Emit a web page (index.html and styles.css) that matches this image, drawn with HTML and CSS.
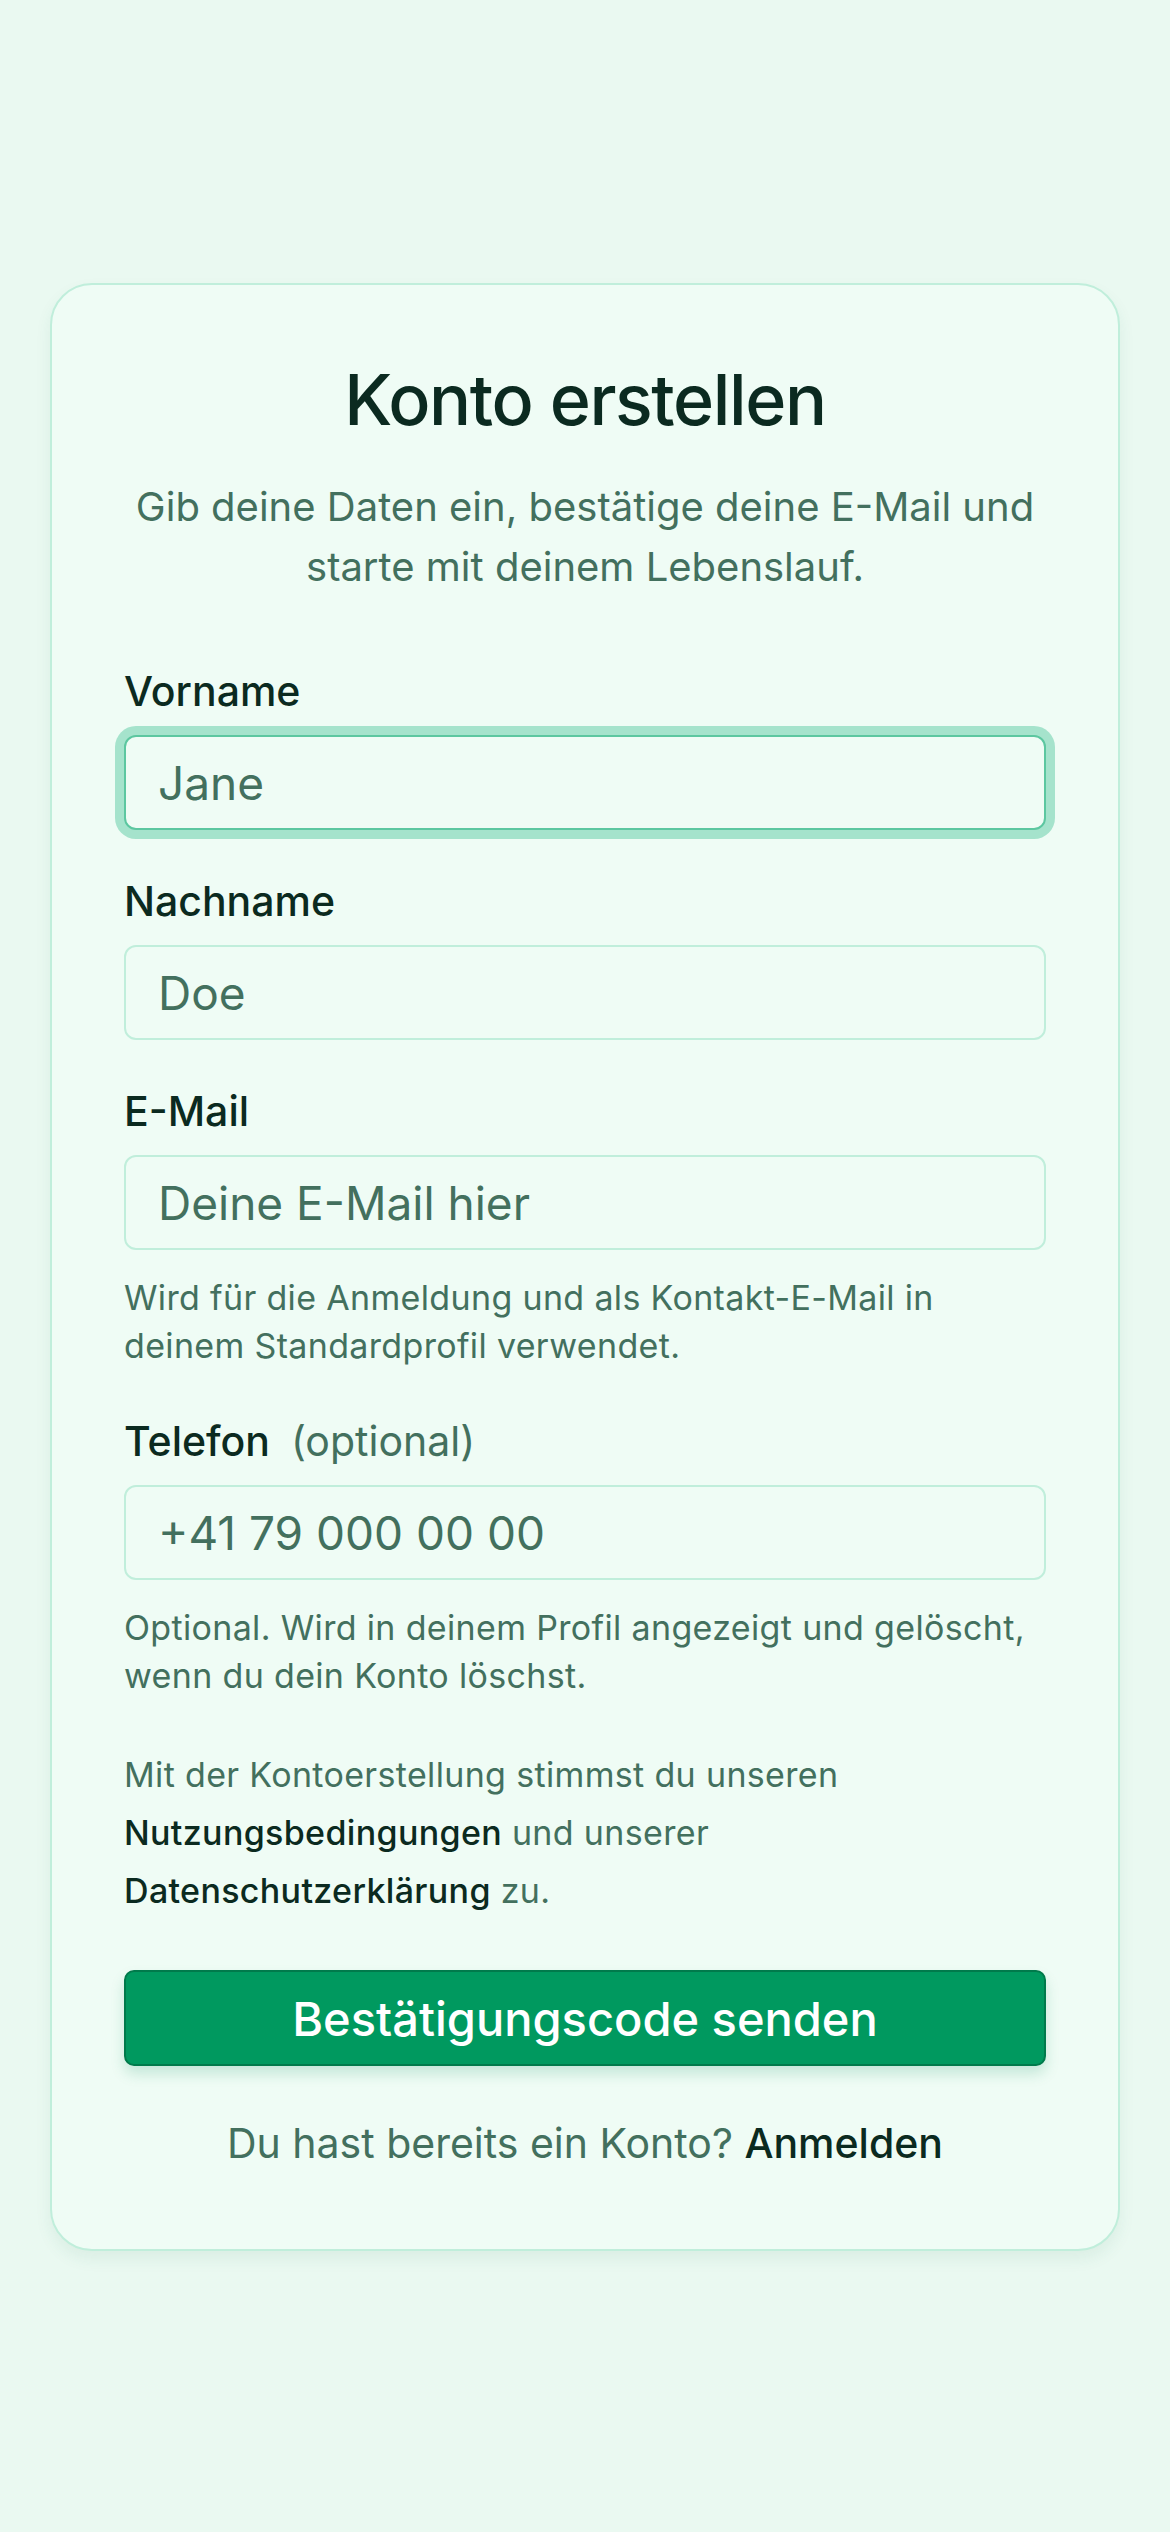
FILE: index.html
```html
<!DOCTYPE html>
<html lang="de">
<head>
    <meta charset="UTF-8">
    <meta name="viewport" content="width=device-width, initial-scale=1.0">
    <title>Konto erstellen</title>
    <link rel="stylesheet" href="styles.css">
</head>
<body>
    <main class="page">
        <!-- Registration card -->
        <section class="card">
            <h1>Konto erstellen</h1>
            <p class="intro">Gib deine Daten ein, bestätige deine E-Mail und starte mit deinem Lebenslauf.</p>

            <form class="signup-form" onsubmit="return false;">
                <div class="field">
                    <label for="firstName">Vorname</label>
                    <input type="text" id="firstName" class="is-focused" placeholder="Jane">
                </div>

                <div class="field">
                    <label for="lastName">Nachname</label>
                    <input type="text" id="lastName" placeholder="Doe">
                </div>

                <div class="field">
                    <label for="email">E-Mail</label>
                    <input type="email" id="email" placeholder="Deine E-Mail hier">
                    <p class="hint">Wird für die Anmeldung und als Kontakt-E-Mail in deinem Standardprofil verwendet.</p>
                </div>

                <div class="field">
                    <label for="phone">Telefon <span class="optional">(optional)</span></label>
                    <input type="tel" id="phone" placeholder="+41 79 000 00 00">
                    <p class="hint">Optional. Wird in deinem Profil angezeigt und gelöscht, wenn du dein Konto löschst.</p>
                </div>

                <p class="terms">
                    Mit der Kontoerstellung stimmst du unseren
                    <a href="#">Nutzungsbedingungen</a> und unserer
                    <a href="#">Datenschutzerklärung</a> zu.
                </p>

                <button type="submit">Bestätigungscode senden</button>
            </form>

            <p class="switch-auth">Du hast bereits ein Konto? <a href="#">Anmelden</a></p>
        </section>
    </main>
</body>
</html>
```

FILE: styles.css
```css
:root {
    --page-bg: #eaf9f1;
    --card-bg: #effcf5;
    --card-border: #c0eedb;
    --text-strong: #0b2a20;
    --text-muted: #43705e;
    --input-border: #c0eedb;
    --focus-border: #5cc7a0;
    --focus-ring: #a5e3cc;
    --primary: #00995f;
    --primary-dark: #007a4b;
}

*, *::before, *::after {
    box-sizing: border-box;
    margin: 0;
    padding: 0;
}

body {
    font-family: Inter, "Noto Sans", sans-serif;
    color: var(--text-strong);
    background-color: var(--page-bg);
    min-height: 100vh;
}

.page {
    padding: 283px 50px 0;
}

.card {
    background: var(--card-bg);
    border: 2px solid var(--card-border);
    border-radius: 42px;
    padding: 72px 72px 77px;
    box-shadow: 0 8px 16px rgba(40, 120, 90, 0.08);
}

h1 {
    text-align: center;
    font-size: 70px;
    line-height: 86px;
    font-weight: 500;
    letter-spacing: -0.02em;
    color: var(--text-strong);
}

.intro {
    margin-top: 34px;
    text-align: center;
    font-size: 40px;
    line-height: 60px;
    color: var(--text-muted);
}

.signup-form {
    margin-top: 69px;
    display: flex;
    flex-direction: column;
    gap: 46px;
}

.field {
    display: flex;
    flex-direction: column;
}

label {
    font-size: 41px;
    line-height: 50px;
    font-weight: 500;
    margin-bottom: 19px;
}

.optional {
    margin-left: 10px;
    font-weight: 400;
    color: var(--text-muted);
}

input {
    width: 100%;
    height: 95px;
    padding: 0 32px;
    border: 2px solid var(--input-border);
    border-radius: 12px;
    background: var(--card-bg);
    font-family: inherit;
    font-size: 46px;
    color: var(--text-strong);
}

input::placeholder {
    color: var(--text-muted);
    opacity: 1;
}

input:focus,
input.is-focused {
    outline: none;
    border-color: var(--focus-border);
    box-shadow: 0 0 0 9px var(--focus-ring);
}

.hint {
    margin-top: 24px;
    font-size: 34px;
    line-height: 48px;
    letter-spacing: 0.01em;
    color: var(--text-muted);
}

.terms {
    font-size: 34px;
    line-height: 58px;
    letter-spacing: 0.01em;
    color: var(--text-muted);
}

.terms a,
.switch-auth a {
    color: var(--text-strong);
    font-weight: 500;
    text-decoration: none;
}

button {
    margin-top: 4px;
    width: 100%;
    height: 96px;
    background-color: var(--primary);
    border: 2px solid var(--primary-dark);
    border-radius: 10px;
    color: #ffffff;
    font-family: inherit;
    font-size: 47px;
    font-weight: 500;
    cursor: pointer;
    box-shadow: 0 8px 14px rgba(0, 140, 90, 0.18);
}

.switch-auth {
    margin-top: 49px;
    text-align: center;
    font-size: 41px;
    line-height: 57px;
    color: var(--text-muted);
}
```
